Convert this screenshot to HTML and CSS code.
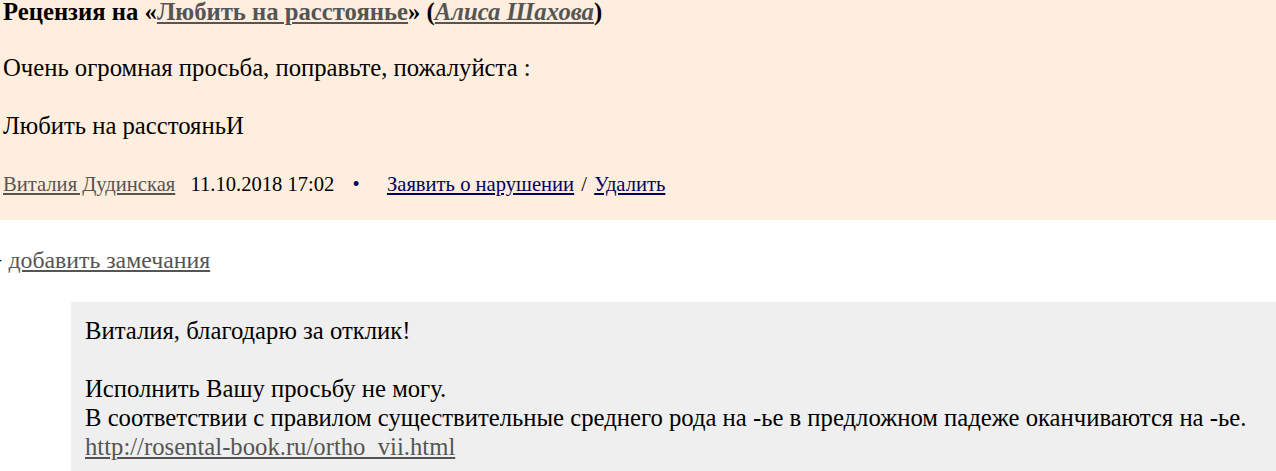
FILE: index.html
```html
<!DOCTYPE html>
<html>
<head>
<meta charset="utf-8">
<title>Рецензия на «Любить на расстоянье»</title>
<link rel="stylesheet" href="styles.css">
</head>
<body>
<div class="review">
  <div class="review-title">Рецензия на «<a href="#">Любить на расстоянье</a>» (<a href="#"><i>Алиса Шахова</i></a>)</div>
  <div class="review-text">Очень огромная просьба, поправьте, пожалуйста :<br><br>Любить на расстояньИ</div>
  <div class="review-meta">
    <a class="author" href="#">Виталия Дудинская</a>
    <span class="date">11.10.2018 17:02</span>
    <span class="dot">&bull;</span>
    <a class="action" href="#">Заявить о нарушении</a> <span class="sep">/</span> <a class="action" href="#">Удалить</a>
  </div>
</div>
<div class="add-note"><span class="plus">+</span> <a href="#">добавить замечания</a></div>
<div class="answer">
  Виталия, благодарю за отклик!<br><br>
  Исполнить Вашу просьбу не могу.<br>
  В соответствии с правилом существительные среднего рода на -ье в предложном падеже оканчиваются на -ье.<br>
  <a href="#">http://rosental-book.ru/ortho_vii.html</a>
</div>
</body>
</html>
```

FILE: styles.css
```css
body {
  margin: 0;
  font-family: "Liberation Serif", "Times New Roman", serif;
  font-size: 24.7px;
  line-height: 29px;
  color: #000;
  background-color: #fff;
}
a {
  color: #555;
}
.review {
  background-color: #ffeedd;
  padding: 0 3px 21px 3px;
}
.review-title {
  font-weight: bold;
  line-height: 23px;
}
.review-text {
  margin-top: 30px;
}
.review-meta {
  margin-top: 30px;
  font-size: 20.6px;
}
.review-meta .date {
  margin-left: 10px;
}
.review-meta .dot {
  color: #000066;
  margin: 0 22px 0 13px;
}
.review-meta .sep {
  margin: 0 2px;
}
.review-meta a.action {
  color: #000066;
}
.add-note {
  margin-top: 26px;
  margin-left: -11px;
  font-size: 23.8px;
}
.add-note .plus {
  color: #000;
}
.answer {
  margin: 27px 0 0 71px;
  padding: 14px 0 20px 14px;
  background-color: #efefef;
}
```
